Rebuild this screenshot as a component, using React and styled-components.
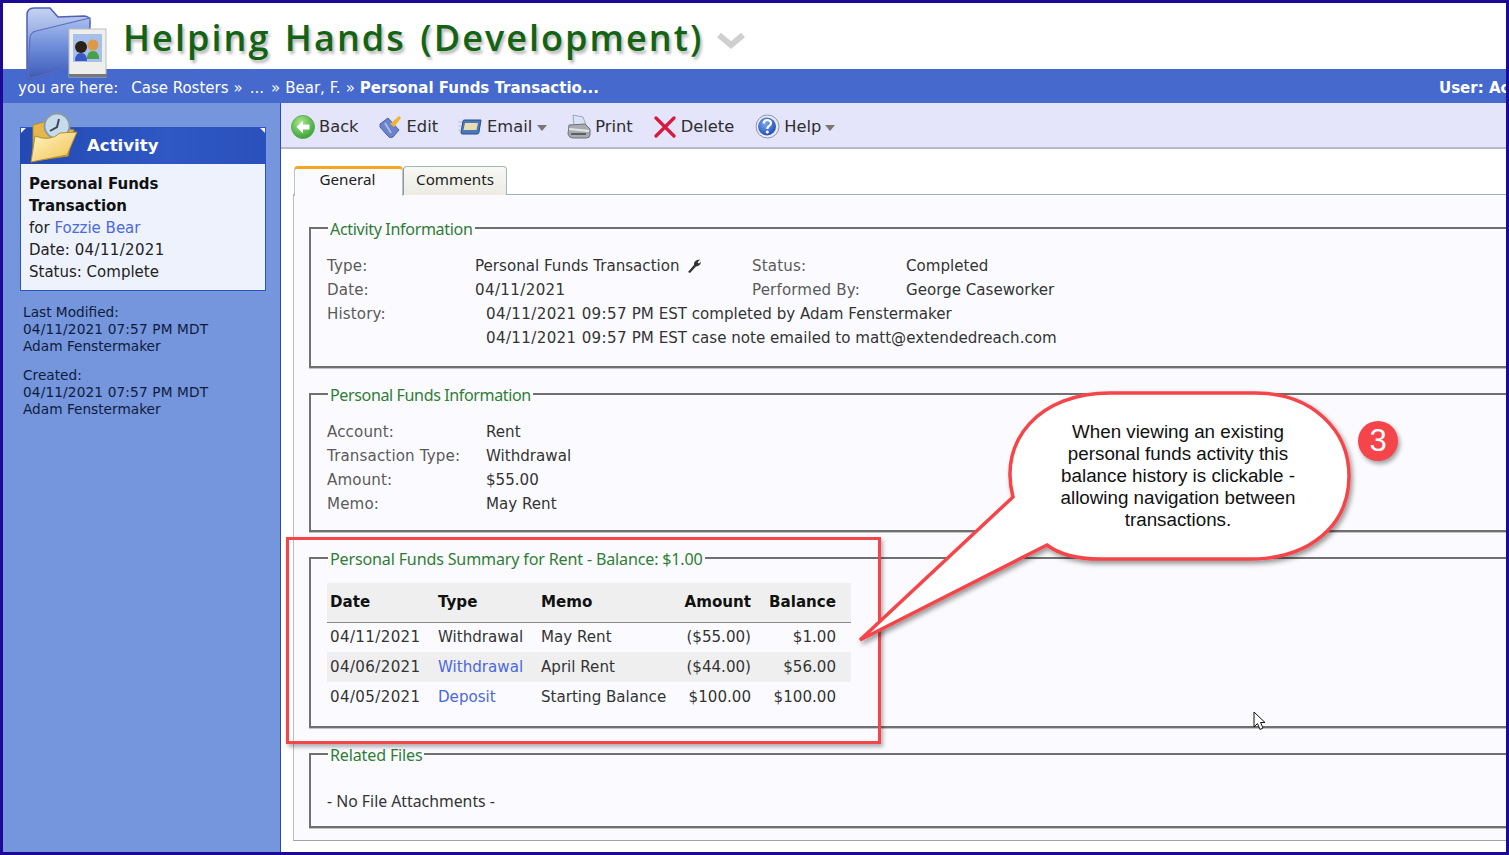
import React from "react";
import styled, { createGlobalStyle } from "styled-components";

const Global = createGlobalStyle`
  html, body { margin: 0; padding: 0; background: #fff; }
  * { box-sizing: border-box; }
`;
const VERDANA = `"DejaVu Sans", Verdana, sans-serif`;

const Page = styled.div`
  position: relative; width: 1509px; height: 855px; overflow: hidden;
  border: 3px solid #1c0a96; display: flex; flex-direction: column;
  font-family: ${VERDANA}; color: #222; background: #fff;
`;
const Header = styled.header`
  height: 66px; flex: none; display: flex; align-items: center; padding: 4px 0 0 120px; gap: 13px;
`;
const Title = styled.h1`
  margin: 0; font: 600 36px/1 "Open Sans", sans-serif; letter-spacing: 2.05px; word-spacing: 3px; color: #146214;
  text-shadow: 2px 3px 3px rgba(0,0,0,.28); white-space: nowrap;
`;
const Chevron = styled.svg`margin-top: 3px;`;
const FolderIcon = styled.svg`position: absolute; left: 19px; top: 0; z-index: 2;`;
const Crumbs = styled.nav`
  height: 34px; flex: none; background: #4569cc; color: #fff; display: flex; align-items: center;
  justify-content: space-between; padding: 3px 0 0 15px; font-size: 15px; white-space: nowrap; overflow: hidden;
`;
const CrumbTrail = styled.div`display: flex; gap: 5px;`;
const Here = styled.span`margin-right: 8px;`;
const Dots = styled.span`margin: 0 2px;`;
const UserBox = styled.b`width: 67px; flex: none; display: block;`;
const Body = styled.div`flex: 1; display: flex; min-height: 0;`;
const Sidebar = styled.aside`
  width: 278px; flex: none; background: #7595dc; border-right: 1px solid #2a4cb0; padding: 24px 15px 0 17px; color: #0e1c3c;
`;
const ActivityCard = styled.section`position: relative; width: 246px; border: 1px solid #2c55bf; background: #eef2fd;`;
const CardHead = styled.div`
  height: 36px; margin: 0 -1px; background: linear-gradient(90deg,#2349b2,#2f58c4 60%,#2a50bb);
  clip-path: polygon(6px 0, calc(100% - 6px) 0, 100% 6px, 100% 100%, 0 100%, 0 6px);
  color: #fff; font-weight: 700; font-size: 16.6px; line-height: 35px; padding-left: 67px;
`;
const ActivityIcon = styled.svg`position: absolute; left: 9px; top: -16px;`;
const CardBody = styled.div`padding: 9px 8px 7px 8px; font-size: 15px; line-height: 22px; color: #222;`;
const CardTitle = styled.div`font-weight: 700; color: #111;`;
const A = styled.a`color: #4a68e0; text-decoration: none;`;
const Meta = styled.div`margin: 13px 0 0 3px; font-size: 13.7px; line-height: 17px; & + & { margin-top: 12px; }`;
const MetaStamp = styled.span`letter-spacing: .13px;`;
const Main = styled.main`flex: 1; min-width: 0; display: flex; flex-direction: column;`;
const Toolbar = styled.div`
  height: 46px; flex: none; background: #e4e4fb; border-bottom: 2px solid #b9b9c6; display: flex; align-items: center;
  padding: 3px 0 0 10px; font-size: 16.3px; color: #2e2e2e;
`;
const Tool = styled.div`display: flex; align-items: center; gap: ${p => p.$gap ?? 5}px; margin-right: ${p => p.$mr ?? 20}px; white-space: nowrap;`;
const Caret = styled.span`width: 0; height: 0; border: 5px solid transparent; border-top: 6px solid #777; border-bottom: 0; margin-top: 2px;`;
const Content = styled.div`flex: 1; min-height: 0; padding: 17px 0 11px 12px; display: flex; flex-direction: column;`;
const Tabs = styled.div`height: 29px; flex: none; display: flex; border-bottom: 1px solid #9fb0b8; position: relative; z-index: 1;`;
const Tab = styled.div`
  height: ${p => p.$active ? 30 : 29}px; width: ${p => p.$w}px; margin-left: 1px;
  font: 400 15.2px/${p => p.$active ? 21 : 24}px "Noto Sans", sans-serif; text-align: center; color: #222;
  ${p => p.$active ? `
    background: #fbfbff; border: 1px solid #b8c4cc; border-top: 3px solid #f5a623; border-bottom: 0; border-radius: 4px 4px 0 0; padding-right: 2px;
  ` : `
    margin-left: 0; background: linear-gradient(#f8f8f4,#ecece4); border: 1px solid #9fb6c0; border-bottom: 0; border-left-color:#8a9a9a; border-radius: 4px 4px 0 0;
  `}
`;
const Pane = styled.div`flex: 1; min-height: 0; background: #fbfbff; border-left: 1px solid #b8bcc4; border-bottom: 1px solid #a0a4a8; padding: 23px 0 0 15px; margin-top: -1px;`;
const Field = styled.fieldset`
  margin: 0 -20px ${p => p.$mb ?? 15}px 0; padding: ${p => p.$pad}; height: ${p => p.$h}px; min-width: 0;
  border: 2px solid #707070; border-radius: 0;
  box-shadow: 0 1px 0 #c4c4c4;
`;
const Legend = styled.legend`
  margin-left: 1px; padding: 2px 2px 0; font: 400 16.1px/20px "Noto Sans", sans-serif; color: #2f7d35; letter-spacing: ${p => p.$ls}px; white-space: nowrap;
`;
const Row = styled.div`display: flex; height: ${p => p.$h ?? 24}px; align-items: center; font-size: 15.1px; color: #3c3c3c; white-space: nowrap;`;
const Label = styled.span`width: ${p => p.$w}px; flex: none; color: #5a5a5a; letter-spacing: .13px;`;
const Value = styled.span`width: ${p => p.$w ? p.$w + "px" : "auto"}; flex: none; display: flex; align-items: center; gap: 3px; color: #333; white-space: pre;`;
const Num = styled.span`letter-spacing: .35px;`;
const Table = styled.table`border-collapse: collapse; table-layout: fixed; width: 524px; font-size: 15.1px; color: #333; white-space: nowrap;`;
const Th = styled.th`
  height: 39px; background: #efefef; border-bottom: 1px solid #888; font-weight: 700; color: #111;
  text-align: ${p => p.$r ? "right" : "left"}; padding: 0 ${p => p.$r ? 15 : 0}px 0 3px;
`;
const Tr = styled.tr`background: ${p => p.$alt ? "#efefef" : "transparent"};`;
const Td = styled.td`height: 30px; text-align: ${p => p.$r ? "right" : "left"}; padding: 0 ${p => p.$r ? 15 : 0}px 0 3px;`;
const Plain = styled.div`font: 400 15.8px/24px "Noto Sans", sans-serif; color: #333; margin-top: 24px;`;
const Highlight = styled.div`
  position: absolute; left: 283px; top: 534px; width: 595px; height: 207px;
  border: 3px solid #f5454a; box-shadow: 2px 3px 4px rgba(0,0,0,.3);
`;
const CalloutShape = styled.svg`position: absolute; left: 850px; top: 380px; overflow: visible;`;
const CalloutText = styled.div`
  position: absolute; left: 1020px; top: 418px; width: 310px; text-align: center;
  font: 400 18.8px/22px "Liberation Sans", Arial, sans-serif; color: #111;
`;
const Badge = styled.div`
  position: absolute; left: 1355px; top: 418px; width: 40px; height: 40px; border-radius: 50%;
  background: #f5454a; color: #fff; font: 400 31px/40px "Liberation Sans", Arial, sans-serif; text-align: center;
  box-shadow: 2px 3px 4px rgba(0,0,0,.35);
`;
const Cursor = styled.svg`position: absolute; left: 1250px; top: 708px;`;

const Folder = () => (
  <FolderIcon width="92" height="78" viewBox="0 0 92 78">
    <defs>
      <linearGradient id="fa" x1="0" y1="0" x2="0" y2="1"><stop offset="0" stopColor="#c4d2f2"/><stop offset="1" stopColor="#4f70c6"/></linearGradient>
      <linearGradient id="fb" x1="0" y1="0" x2="0" y2="1"><stop offset="0" stopColor="#a9bfee"/><stop offset=".5" stopColor="#6c8ad8"/><stop offset="1" stopColor="#3d5cb8"/></linearGradient>
    </defs>
    <path d="M5 12 Q5 5 12 5 L28 5 L36 14 L62 13 Q68 13 68 19 L66 60 L9 76 Q5 76 5 70 Z" fill="url(#fa)" stroke="#4e5fb4" strokeWidth="1.5"/>
    <path d="M8 34 Q9 29 14 28 L68 15 L66 60 L10 75 Q6 76 6 70 Z" fill="url(#fb)" stroke="#5a6dc2" strokeWidth="1.2"/>
    <rect x="47" y="26" width="37" height="48" fill="#eeeeec" stroke="#bdbdbd" strokeWidth="1"/>
    <rect x="47" y="71" width="38" height="3" fill="#777"/>
    <rect x="51" y="31" width="29" height="28" fill="#a6c0ea"/>
    <circle cx="59" cy="44" r="6" fill="#2a2218"/>
    <path d="M53 58 Q53 50 59 50 Q65 50 65 58 Z" fill="#3a58c8"/>
    <circle cx="71" cy="42" r="5.5" fill="#dc9a48"/>
    <path d="M65 56 Q65 48 71 48 Q77 48 77 56 Z" fill="#4aa04a"/>
  </FolderIcon>
);
const ActivityFolder = () => (
  <ActivityIcon width="52" height="52" viewBox="0 0 52 52">
    <defs>
      <linearGradient id="ya" x1="0" y1="0" x2="1" y2="1"><stop offset="0" stopColor="#fff6c4"/><stop offset="1" stopColor="#f0c050"/></linearGradient>
    </defs>
    <path d="M3 13 L18 9 L24 15 L44 18 L38 44 L3 49 Z" fill="#e6b84a" stroke="#b58c2e"/>
    <circle cx="27" cy="14" r="12.5" fill="#c4dcec" stroke="#8a9aa8" strokeWidth="2"/>
    <path d="M29 7 L27 15 L20 19" fill="none" stroke="#445" strokeWidth="2"/>
    <path d="M5 24 Q20 30 30 21 L47 20 L37 43 L1 50 Z" fill="url(#ya)" stroke="#b58c2e"/>
  </ActivityIcon>
);
const BackIcon = () => (
  <svg width="24" height="24" viewBox="0 0 24 24">
    <defs><radialGradient id="bk" cx=".4" cy=".3" r=".8"><stop offset="0" stopColor="#a8e88a"/><stop offset="1" stopColor="#2c9a2c"/></radialGradient></defs>
    <circle cx="12" cy="12" r="11.5" fill="url(#bk)" stroke="#5cae5c"/>
    <path d="M12 5.5 L5.5 12 L12 18.5 V14.5 H18.5 V9.5 H12 Z" fill="#fff"/>
  </svg>
);
const EditIcon = () => (
  <svg width="23" height="24" viewBox="0 0 23 24">
    <path d="M1 9 L9 3 L20 15 L14 22 Q10 24 8 20 L1 12 Z" fill="#6b82cc" stroke="#4a60ae"/>
    <path d="M6 8 L12 18" stroke="#a8b8e8" strokeWidth="2"/>
    <path d="M11 9 L20 1 L22 3 L15 12 Z" fill="#f0b428"/>
  </svg>
);
const EmailIcon = () => (
  <svg width="24" height="16" viewBox="0 0 24 16">
    <path d="M0 3 H4 M0 7 H3 M0 11 H2" stroke="#b8c0dc"/>
    <path d="M5 2 Q5 1 7 1 H23 L21 13 Q21 15 19 15 H4 Q3 15 3 13 Z" fill="#4a78b8" stroke="#2c4c8c"/>
    <path d="M7 4 H20 L18.5 11 H5.5 Z" fill="#e8dcb0"/>
  </svg>
);
const PrintIcon = () => (
  <svg width="24" height="25" viewBox="0 0 24 25">
    <path d="M6 1 L16 3 L19 11 L7 11 Z" fill="#d8e4f4" stroke="#9aa8bc"/>
    <path d="M2 11 L18 10 L23 15 V21 Q23 24 19 24 H6 Q2 24 1 20 Z" fill="#a8acb0" stroke="#707478"/>
    <path d="M2 15 L22 17" stroke="#e4e6e8" strokeWidth="2"/>
    <path d="M4 20 H19" stroke="#5c6064" strokeWidth="2"/>
  </svg>
);
const DeleteIcon = () => (
  <svg width="22" height="22" viewBox="0 0 22 22">
    <path d="M2 2 L20 20 M20 2 L2 20" stroke="#d8183c" strokeWidth="3.2" strokeLinecap="round"/>
  </svg>
);
const HelpIcon = () => (
  <svg width="25" height="25" viewBox="0 0 25 25">
    <defs><radialGradient id="hp" cx=".4" cy=".35" r=".7"><stop offset="0" stopColor="#7aa8ee"/><stop offset="1" stopColor="#1c48b8"/></radialGradient></defs>
    <circle cx="12.5" cy="12.5" r="11.5" fill="#e8ecf4" stroke="#8c94a4"/>
    <circle cx="12" cy="12.5" r="9" fill="url(#hp)"/>
    <path d="M8.5 9.5 Q9 6 12.5 6 Q16 6.3 16 9.3 Q16 11 13.5 12.5 Q12.3 13.3 12.3 15" fill="none" stroke="#fff" strokeWidth="2.2"/>
    <circle cx="12.3" cy="18" r="1.5" fill="#fff"/>
  </svg>
);
const Wrench = () => (
  <svg width="14" height="14" viewBox="0 0 14 14">
    <path d="M1 13 L7 6 Q6.5 2.5 10 1 L13 0.5 L10.5 3.5 L12 4.5 L14 2.5 Q13.5 7 9 7.5 L3 14 Z" fill="#333"/>
  </svg>
);

export default function App() {
  return (
    <Page>
      <Global />
      <Folder />
      <Header>
        <Title>Helping Hands (Development)</Title>
        <Chevron width="30" height="20" viewBox="0 0 30 20"><path d="M3 5 L15 15 L27 5" fill="none" stroke="#cfcfcf" strokeWidth="6" /></Chevron>
      </Header>
      <Crumbs>
        <CrumbTrail>
          <Here>you are here:</Here>
          <span>Case Rosters</span><span>»</span><Dots>...</Dots><span>»</span><span>Bear, F.</span><span>»</span>
          <b>Personal Funds Transactio...</b>
        </CrumbTrail>
        <UserBox>User: Ac</UserBox>
      </Crumbs>
      <Body>
        <Sidebar>
          <ActivityCard>
            <CardHead>Activity</CardHead>
            <ActivityFolder />
            <CardBody>
              <CardTitle>Personal Funds<br />Transaction</CardTitle>
              for <A>Fozzie Bear</A><br />
              Date: <Num>04/11/2021</Num><br />
              Status: Complete
            </CardBody>
          </ActivityCard>
          <Meta>Last Modified:<br /><MetaStamp>04/11/2021 07:57 PM MDT</MetaStamp><br />Adam Fenstermaker</Meta>
          <Meta>Created:<br /><MetaStamp>04/11/2021 07:57 PM MDT</MetaStamp><br />Adam Fenstermaker</Meta>
        </Sidebar>
        <Main>
          <Toolbar>
            <Tool $mr={20} $gap={4}><BackIcon />Back</Tool>
            <Tool $mr={20}><EditIcon />Edit</Tool>
            <Tool $mr={20}><EmailIcon />Email<Caret /></Tool>
            <Tool $mr={21} $gap={4}><PrintIcon />Print</Tool>
            <Tool $mr={21} $gap={5}><DeleteIcon />Delete</Tool>
            <Tool $gap={4}><HelpIcon />Help<Caret /></Tool>
          </Toolbar>
          <Content>
            <Tabs>
              <Tab $active $w={109}>General</Tab>
              <Tab $w={104}>Comments</Tab>
            </Tabs>
            <Pane>
              <Field $h={151} $pad="15px 0 0 16px">
                <Legend $ls={-0.35}>Activity Information</Legend>
                <Row><Label $w={148}>Type:</Label><Value $w={277}>Personal Funds Transaction <Wrench /></Value><Label $w={154}>Status:</Label><Value>Completed</Value></Row>
                <Row><Label $w={148}>Date:</Label><Value $w={277}><Num>04/11/2021</Num></Value><Label $w={154}>Performed By:</Label><Value>George Caseworker</Value></Row>
                <Row><Label $w={159}>History:</Label><Value><span><Num>04/11/2021 09:57</Num> PM EST completed by Adam Fenstermaker</span></Value></Row>
                <Row><Label $w={159} /><Value><span><Num>04/11/2021 09:57</Num> PM EST case note emailed to matt@extendedreach.com</span></Value></Row>
              </Field>
              <Field $h={149} $pad="15px 0 0 16px">
                <Legend $ls={-0.4}>Personal Funds Information</Legend>
                <Row><Label $w={159}>Account:</Label><Value>Rent</Value></Row>
                <Row><Label $w={159}>Transaction Type:</Label><Value>Withdrawal</Value></Row>
                <Row><Label $w={159}>Amount:</Label><Value>$55.00</Value></Row>
                <Row><Label $w={159}>Memo:</Label><Value>May Rent</Value></Row>
              </Field>
              <Field $h={181} $pad="14px 0 0 16px">
                <Legend $ls={-0.17}>Personal Funds Summary for Rent - Balance: $1.00</Legend>
                <Table>
                  <colgroup><col width="108" /><col width="103" /><col width="131" /><col width="97" /><col width="85" /></colgroup>
                  <thead>
                    <tr><Th>Date</Th><Th>Type</Th><Th>Memo</Th><Th $r>Amount</Th><Th $r>Balance</Th></tr>
                  </thead>
                  <tbody>
                    <Tr><Td><Num>04/11/2021</Num></Td><Td>Withdrawal</Td><Td>May Rent</Td><Td $r>($55.00)</Td><Td $r>$1.00</Td></Tr>
                    <Tr $alt><Td><Num>04/06/2021</Num></Td><Td><A>Withdrawal</A></Td><Td>April Rent</Td><Td $r>($44.00)</Td><Td $r>$56.00</Td></Tr>
                    <Tr><Td><Num>04/05/2021</Num></Td><Td><A>Deposit</A></Td><Td>Starting Balance</Td><Td $r>$100.00</Td><Td $r>$100.00</Td></Tr>
                  </tbody>
                </Table>
              </Field>
              <Field $h={85} $pad="0 0 0 16px" $mb={0}>
                <Legend $ls={-0.17}>Related Files</Legend>
                <Plain>- No File Attachments -</Plain>
              </Field>
            </Pane>
          </Content>
        </Main>
      </Body>

      <Highlight />
      <CalloutShape width="510" height="260" viewBox="0 0 510 260">
        <defs><filter id="sh" x="-5%" y="-5%" width="112%" height="115%"><feDropShadow dx="2" dy="3" stdDeviation="2.5" floodColor="#000" floodOpacity=".4" /></filter></defs>
        <path transform="translate(-853 -383)"
          d="M1013 497 C998 440 1040 393 1110 393 L1255 393 C1312 393 1349 430 1349 476 C1349 525 1310 559 1250 559 L1100 559 C1080 559 1060 555 1047 545 L860 640 Z"
          fill="#fff" stroke="#f5454a" strokeWidth="3.5" filter="url(#sh)" />
      </CalloutShape>
      <CalloutText>When viewing an existing<br />personal funds activity this<br />balance history is clickable -<br />allowing navigation between<br />transactions.</CalloutText>
      <Badge>3</Badge>
      <Cursor width="14" height="20" viewBox="0 0 14 20">
        <path d="M1 1 V16 L4.5 12.5 L7 18.5 L10 17 L7.5 11.5 H12 Z" fill="#fff" stroke="#111" strokeWidth="1" />
      </Cursor>
    </Page>
  );
}
